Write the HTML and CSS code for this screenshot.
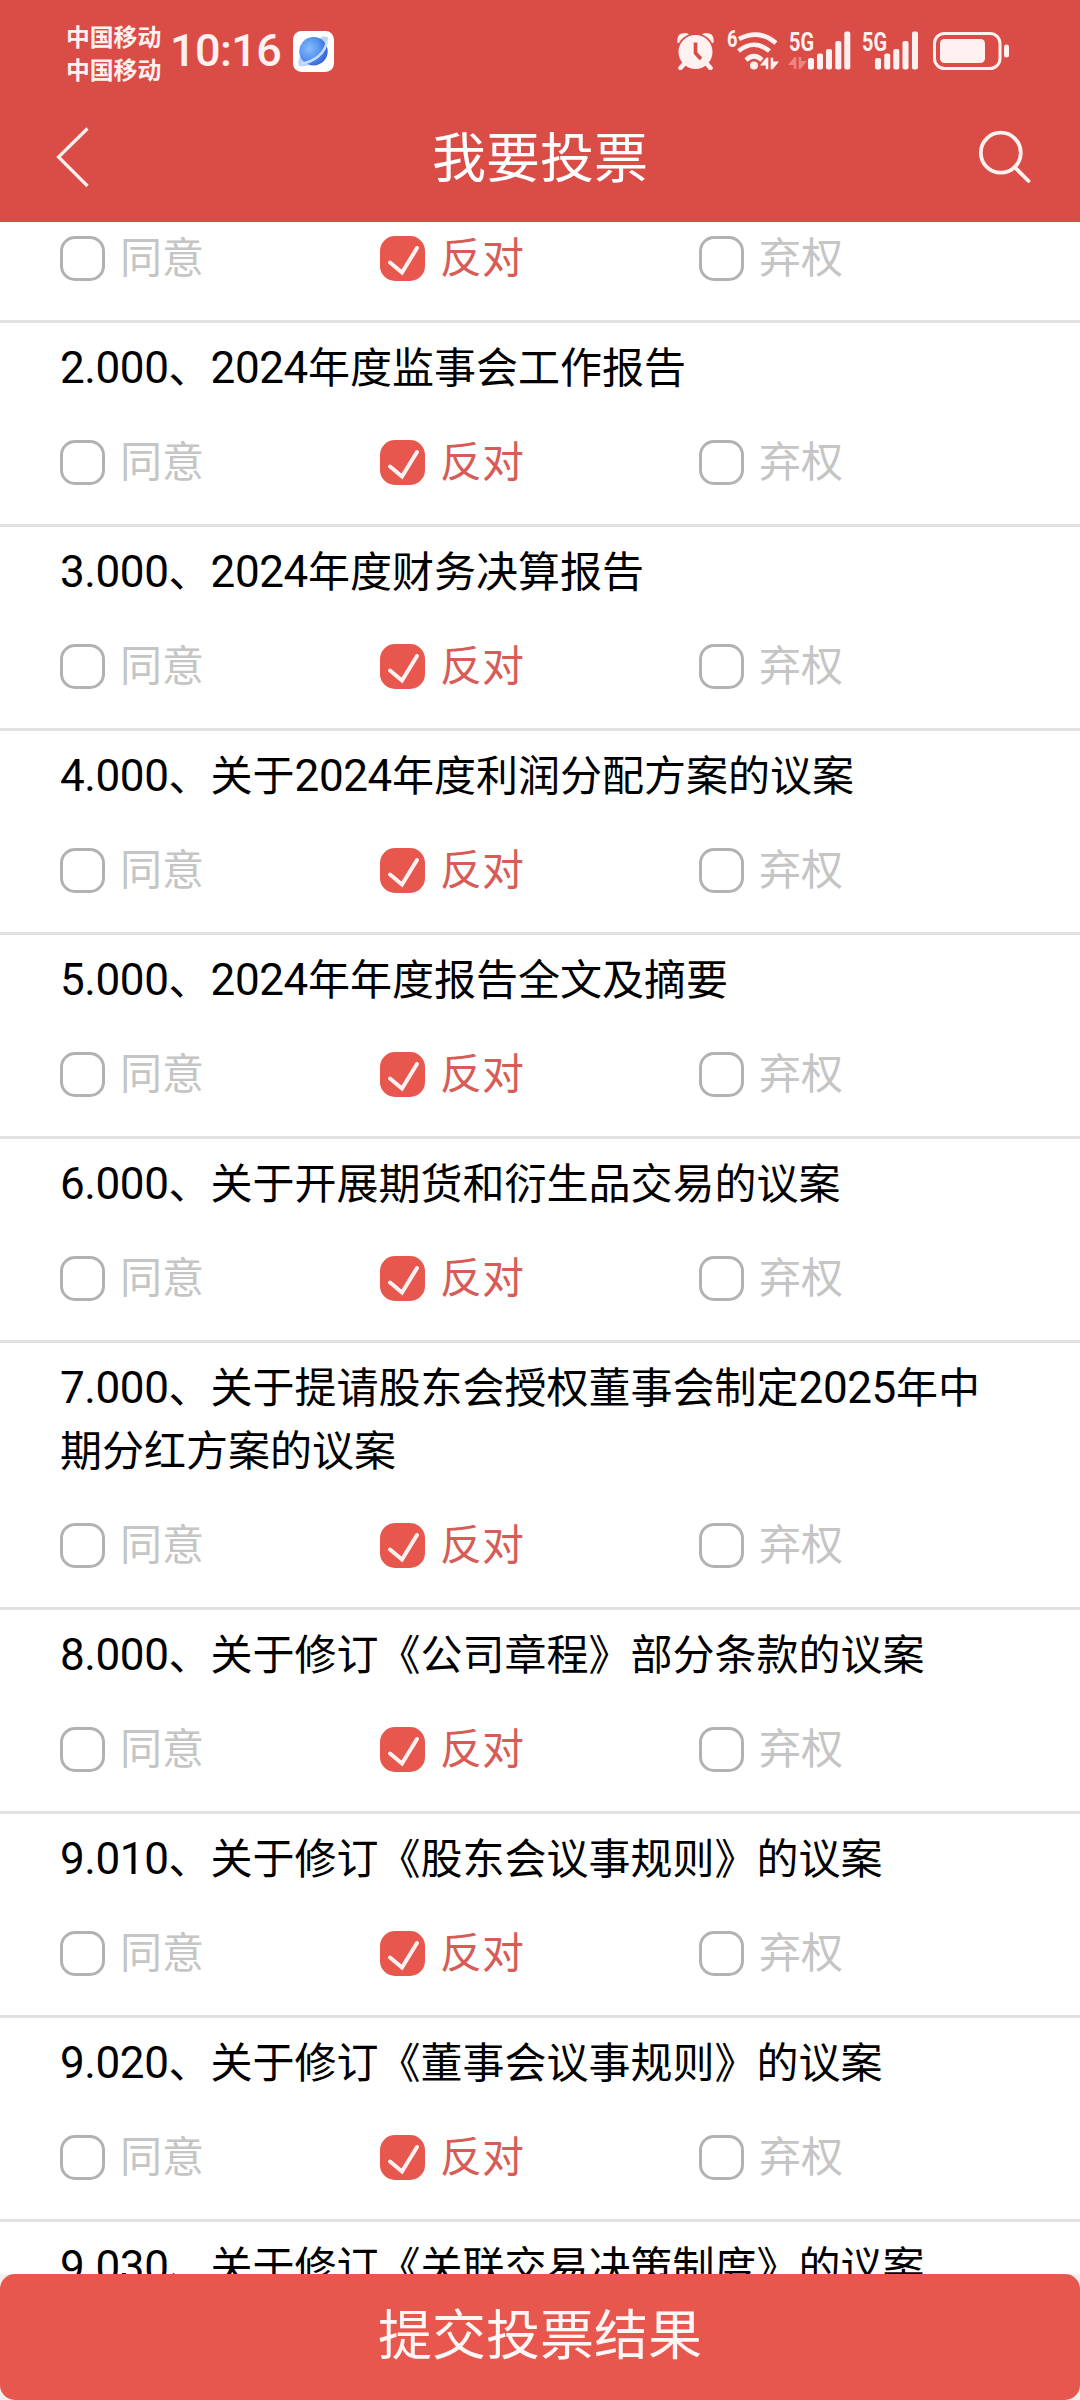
FILE: index.html
```html
<!DOCTYPE html>
<html lang="zh-CN">
<head>
<meta charset="utf-8">
<title>我要投票</title>
<link rel="stylesheet" href="styles.css">
</head>
<body>
<svg class="defs" width="0" height="0" aria-hidden="true">
  <symbol id="tick" viewBox="0 0 45 45"><path d="M10 26.500 L22 36.500 L37 12" fill="none" stroke="#fff1ef" stroke-width="4" stroke-linecap="round"/></symbol>
  <symbol id="arrows" viewBox="0 0 19 12"><path d="M8.3 0V12H5.8V8H0L6 0.6Q8.3 -1 8.3 0ZM10.7 12V0H13.2V4H19L13 11.4Q10.7 13 10.7 12Z"/></symbol>
</svg>
<div class="screen">
  <header class="top">
    <div class="status">
      <div class="carriers"><span>中国移动</span><span>中国移动</span></div>
      <div class="time">10:16</div>
      <svg class="app" width="41" height="41" viewBox="0 0 41 41">
        <defs><radialGradient id="ball" cx=".35" cy=".4" r=".75"><stop offset="0" stop-color="#85bdfb"/><stop offset=".5" stop-color="#5795f0"/><stop offset="1" stop-color="#2854d0"/></radialGradient></defs>
        <rect width="41" height="41" rx="8.5" fill="#fff"/>
        <path d="M27 6.500Q34 4.500 35 7Q35 12 32 17Z M7 25Q4 33 6.500 35Q12 36 18 33Z" fill="#b9d2fa"/>
        <circle cx="20.500" cy="20.300" r="14.200" fill="url(#ball)"/>
        <path d="M33.500 9.500Q34 18 25 25.500Q17 32 8 32.500" fill="none" stroke="#c8dcfc" stroke-width="2.500"/>
      </svg>
      <svg class="alarm" width="37" height="38" viewBox="0 0 37 38">
        <g fill="#fff1ef"><circle cx="18.500" cy="20" r="17"/><path d="M0.500 11Q-1 1 8 1Q11 1 12 2.500Q5 5 2 11Z M36.500 11Q38 1 29 1Q26 1 25 2.500Q32 5 35 11Z"/></g>
        <path d="M7 32L3.500 36M30 32L33.500 36" stroke="#fff1ef" stroke-width="4.500" stroke-linecap="round"/>
        <path d="M18.500 10.500V21L24 27" fill="none" stroke="#d94c46" stroke-width="3.600"/>
      </svg>
      <svg class="wifi" width="52" height="60" viewBox="0 -10 52 60">
        <text x="0" y="17" font-size="23" textLength="10.500" lengthAdjust="spacingAndGlyphs">6</text>
        <g fill="none" stroke="#fff1ef" stroke-width="4.600" stroke-linecap="butt"><path d="M12 9Q32 -1.500 49 13"/><path d="M11.500 21Q27 8.500 42.500 21"/><path d="M19 30Q27 22.500 35 30"/></g>
        <circle cx="27" cy="35.500" r="4" fill="#fff1ef"/>
        <use href="#arrows" x="33" y="27.500" width="19" height="12" fill="#fff1ef"/>
      </svg>
      <svg class="signal" width="64" height="60" viewBox="0 -10 64 60">
        <text x="1" y="20.500" font-size="25.500" textLength="25" lengthAdjust="spacingAndGlyphs">5G</text>
        <use href="#arrows" x="0" y="27" width="19" height="12" fill="#ee8480"/>
        <g fill="#fff1ef"><rect x="20" y="28" width="6" height="11.500" rx="2"/><rect x="29" y="23.500" width="6" height="16" rx="2"/><rect x="38" y="19" width="6" height="20.500" rx="2"/><rect x="47.300" y="11" width="6" height="28.500" rx="2"/><rect x="56.300" y="1.500" width="6" height="38" rx="2"/></g>
      </svg>
      <svg class="signal second" width="58" height="60" viewBox="0 -10 58 60">
        <text x="1" y="20.500" font-size="25.500" textLength="25" lengthAdjust="spacingAndGlyphs">5G</text>
        <g fill="#fff1ef"><rect x="14" y="28" width="6" height="11.500" rx="2"/><rect x="23.200" y="23.500" width="6" height="16" rx="2"/><rect x="32.300" y="19" width="6" height="20.500" rx="2"/><rect x="41.500" y="11" width="6" height="28.500" rx="2"/><rect x="51" y="1.500" width="6" height="38" rx="2"/></g>
      </svg>
      <svg class="battery" width="77" height="38" viewBox="0 0 77 38">
        <rect x="1.500" y="1.500" width="65.500" height="35" rx="10" fill="none" stroke="#fff1ef" stroke-width="3"/>
        <rect x="7" y="7" width="45" height="24" rx="4.500" fill="#fff1ef"/><rect x="71" y="12.500" width="5" height="13" rx="2.500" fill="#fff1ef"/>
      </svg>
    </div>
    <div class="nav">
      <svg class="back" width="36" height="64" viewBox="0 0 36 64"><path d="M32.500 3.500L3.500 32L32.500 61" fill="none" stroke="#fff1ef" stroke-width="3.200"/></svg>
      <h1>我要投票</h1>
      <svg class="search" width="54" height="54" viewBox="0 0 54 54"><g fill="none" stroke="#fff1ef" stroke-width="3.800"><circle cx="22.800" cy="22.700" r="20"/><path d="M36.500 37L50.500 51" stroke-linecap="round"/></g></svg>
    </div>
  </header>
  <main class="list">
    <section class="item partial"><div class="options"><div class="option"><i class="box"></i><span>同意</span></div><div class="option on"><i class="box"><svg><use href="#tick"/></svg></i><span>反对</span></div><div class="option"><i class="box"></i><span>弃权</span></div></div></section>
    <section class="item"><h2><b>2.000</b>、<b>2024</b>年度监事会工作报告</h2><div class="options"><div class="option"><i class="box"></i><span>同意</span></div><div class="option on"><i class="box"><svg><use href="#tick"/></svg></i><span>反对</span></div><div class="option"><i class="box"></i><span>弃权</span></div></div></section>
    <section class="item"><h2><b>3.000</b>、<b>2024</b>年度财务决算报告</h2><div class="options"><div class="option"><i class="box"></i><span>同意</span></div><div class="option on"><i class="box"><svg><use href="#tick"/></svg></i><span>反对</span></div><div class="option"><i class="box"></i><span>弃权</span></div></div></section>
    <section class="item"><h2><b>4.000</b>、关于<b>2024</b>年度利润分配方案的议案</h2><div class="options"><div class="option"><i class="box"></i><span>同意</span></div><div class="option on"><i class="box"><svg><use href="#tick"/></svg></i><span>反对</span></div><div class="option"><i class="box"></i><span>弃权</span></div></div></section>
    <section class="item"><h2><b>5.000</b>、<b>2024</b>年年度报告全文及摘要</h2><div class="options"><div class="option"><i class="box"></i><span>同意</span></div><div class="option on"><i class="box"><svg><use href="#tick"/></svg></i><span>反对</span></div><div class="option"><i class="box"></i><span>弃权</span></div></div></section>
    <section class="item"><h2><b>6.000</b>、关于开展期货和衍生品交易的议案</h2><div class="options"><div class="option"><i class="box"></i><span>同意</span></div><div class="option on"><i class="box"><svg><use href="#tick"/></svg></i><span>反对</span></div><div class="option"><i class="box"></i><span>弃权</span></div></div></section>
    <section class="item"><h2><b>7.000</b>、关于提请股东会授权董事会制定<b>2025</b>年中<br>期分红方案的议案</h2><div class="options"><div class="option"><i class="box"></i><span>同意</span></div><div class="option on"><i class="box"><svg><use href="#tick"/></svg></i><span>反对</span></div><div class="option"><i class="box"></i><span>弃权</span></div></div></section>
    <section class="item"><h2><b>8.000</b>、关于修订《公司章程》部分条款的议案</h2><div class="options"><div class="option"><i class="box"></i><span>同意</span></div><div class="option on"><i class="box"><svg><use href="#tick"/></svg></i><span>反对</span></div><div class="option"><i class="box"></i><span>弃权</span></div></div></section>
    <section class="item"><h2><b>9.010</b>、关于修订《股东会议事规则》的议案</h2><div class="options"><div class="option"><i class="box"></i><span>同意</span></div><div class="option on"><i class="box"><svg><use href="#tick"/></svg></i><span>反对</span></div><div class="option"><i class="box"></i><span>弃权</span></div></div></section>
    <section class="item"><h2><b>9.020</b>、关于修订《董事会议事规则》的议案</h2><div class="options"><div class="option"><i class="box"></i><span>同意</span></div><div class="option on"><i class="box"><svg><use href="#tick"/></svg></i><span>反对</span></div><div class="option"><i class="box"></i><span>弃权</span></div></div></section>
    <section class="item"><h2><b>9.030</b>、关于修订《关联交易决策制度》的议案</h2></section>
  </main>
  <footer class="bottom"><button class="submit" type="button">提交投票结果</button></footer>
</div>
</body>
</html>
```
FILE: styles.css
```css
* { box-sizing: border-box; }
body { margin: 0; background: #fff; font-family: "Noto Sans CJK SC", sans-serif; }
.defs { position: absolute; }
.screen { width: 1080px; height: 2400px; display: flex; flex-direction: column; overflow: hidden; }

.top { flex: none; height: 222px; background: #da4c46; color: #fff1ef; }
.status { height: 102px; display: flex; align-items: center; padding-left: 66px; }
.carriers { width: 96px; display: flex; flex-direction: column; font-size: 23.8px; font-weight: 700; line-height: 33px; margin-top: 1px; }
.time { width: 131px; padding-left: 8px; font: 500 45px/60px Roboto, sans-serif; letter-spacing: -0.6px; }
.status svg text { font-family: Roboto, sans-serif; font-weight: 700; fill: #fff1ef; }
.alarm { margin-left: 343px; }
.wifi { margin-left: 13px; margin-top: -2px; }
.signal { margin-left: 9px; margin-top: -2px; }
.battery { margin-left: 14px; }
.nav { height: 110px; padding: 0 48px 0 55px; display: flex; align-items: center; justify-content: space-between; }
.nav h1 { margin: 0; padding-bottom: 5px; font-size: 54px; font-weight: 400; line-height: 80px; color: #fff; }
.back { margin-right: 11px; }

.list { flex: 1; min-height: 0; overflow: hidden; }
.item { border-top: 3px solid #e2e2e2; padding: 10px 60px 39px; }
.item.partial { border-top: 0; padding-top: 14px; }
.item h2 { margin: 0 0 44px; font-size: 42px; font-weight: 400; line-height: 63px; color: #000; white-space: nowrap; }
.item h2 b { font: 400 44px/1 Roboto, sans-serif; letter-spacing: -0.4px; }
.options { display: grid; grid-template-columns: 320px 319px 320px; grid-template-rows: 45px; }
.option { height: 45px; display: flex; align-items: center; gap: 15px; font-size: 42px; line-height: 45px; color: #c5c5c5; }
.option span { padding-bottom: 8px; }
.box { flex: none; width: 45px; height: 45px; border: 3px solid #b2b2b2; border-radius: 15px; }
.on { color: #d65c55; }
.on .box { border: 0; background: #e7574e; }
.box svg { display: block; width: 45px; height: 45px; }

.bottom { flex: none; height: 126px; background: #f1efef; }
.submit { display: block; width: 100%; height: 126px; padding: 0 0 11px; border: 0; border-radius: 15px; background: #e7574e; color: #fff6f5; font: 400 54px/80px "Noto Sans CJK SC", sans-serif; }
```
